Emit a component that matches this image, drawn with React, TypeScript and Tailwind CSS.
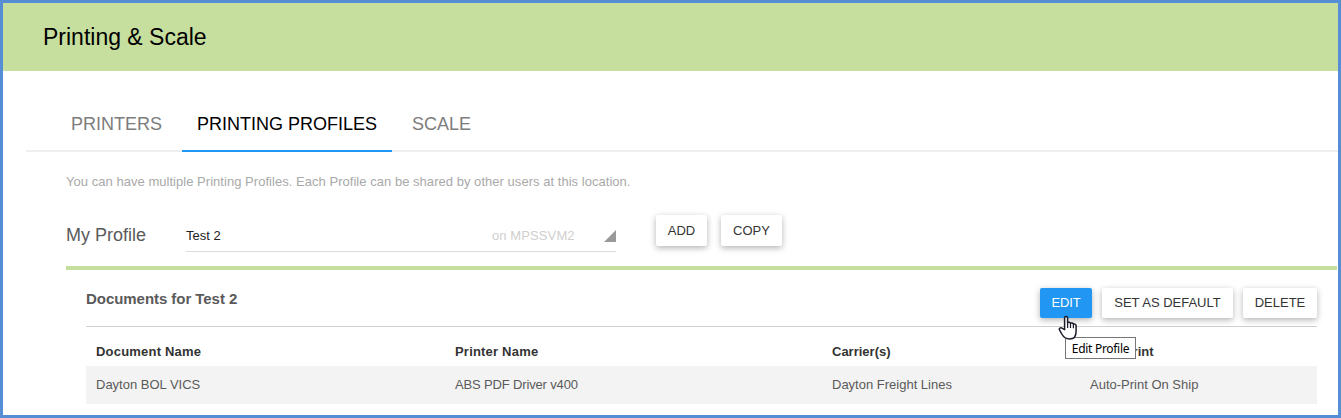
import type { ReactNode } from "react";

function Button({ children, className }: { children: ReactNode; className: string }) {
  return (
    <button
      className={`flex items-start justify-center rounded-[2px] text-[13px] whitespace-nowrap shadow-[0_2px_6px_rgba(0,0,0,0.3)] ${className}`}
    >
      {children}
    </button>
  );
}

function HandCursor() {
  return (
    <svg className="absolute left-[18px] top-[27px] z-20" width="22" height="27" viewBox="0 0 22 27">
      <path
        d="M6.6 14.6V3.2c0-2.2 3-2.2 3 0V7.9c.6-.9 2.6-.7 2.9.5.7-.8 2.6-.5 2.9.8.9-.6 2.7-.1 2.7 1.6v5.7c0 4.6-2.4 7.5-6.4 7.5-4.3 0-6.2-1.9-7.9-5l-2.3-4.1c-.8-1.7 1.1-2.7 2.5-1.8z"
        fill="#fff"
        stroke="#1a1a2b"
        strokeWidth="1.5"
        strokeLinejoin="round"
      />
      <path d="M9.6 7.9v5M12.5 8.5v4.6M15.4 9.3v4" fill="none" stroke="#1a1a2b" strokeWidth="1.2" />
    </svg>
  );
}

export default function App() {
  return (
    <div className="flex h-[418px] w-[1341px] flex-col overflow-hidden border-3 border-[#558ed5] bg-white font-['Liberation_Sans',Arial,sans-serif] text-[13px] text-[#5a5a5a]">
      <header className="flex h-[68px] shrink-0 items-center bg-[#c7df9e] pl-10">
        <h1 className="text-[23px] leading-7 text-black">Printing &amp; Scale</h1>
      </header>

      <nav className="mt-[25px] ml-[23px] flex h-14 shrink-0 border-b-2 border-[#eeeeee] pl-[30px] text-[18px] leading-[56px] text-[#7d7d7d]">
        <span className="w-[126px] pl-[15px]">PRINTERS</span>
        <span className="h-14 w-[210px] border-b-2 border-[#2196f3] pl-[15px] text-black">PRINTING PROFILES</span>
        <span className="pl-5">SCALE</span>
      </nav>

      <main className="mr-px ml-[63px] flex flex-col">
        <p className="mt-5 h-5 leading-5 tracking-[0.035px] whitespace-nowrap text-[#a9a9a9]">
          You can have multiple Printing Profiles. Each Profile can be shared by other users at this location.
        </p>

        <section className="mt-[23px] flex h-[51px] items-start">
          <h2 className="w-[120px] pt-[10px] text-[18px] leading-5">My Profile</h2>
          <div className="flex h-[37px] w-[430px] items-start border-b border-[#dcdcdc] pt-[11px] leading-5 text-[#222]">
            <span className="w-[306px]">Test 2</span>
            <span className="flex-1 tracking-[0.1px] text-[#cfcfcf]">on MPSSVM2</span>
            <svg className="mt-1" width="12" height="12" viewBox="0 0 12 12">
              <path d="M12 0v12H0z" fill="#999" />
            </svg>
          </div>
          <Button className="ml-10 h-[31px] w-[51px] bg-white leading-[31px] text-[#333]">ADD</Button>
          <Button className="ml-[14px] h-[31px] w-[61px] bg-white leading-[31px] text-[#333]">COPY</Button>
        </section>

        <section className="border-t-4 border-[#c7df9e] pr-5 pl-5">
          <div className="flex h-[57px] items-start border-b border-[#d0d0d0] pt-[18px]">
            <h3 className="flex-1 text-[15px] leading-[22px] font-bold tracking-[-0.05px]">Documents for Test 2</h3>
            <div className="flex gap-[10px]">
              <div className="relative">
                <Button className="h-[30px] w-[52px] bg-[#2196f3] leading-[29px] tracking-[-0.2px] text-white">EDIT</Button>
                <HandCursor />
                <div
                  role="tooltip"
                  className="absolute top-[49px] left-[25px] z-10 flex h-[22px] w-[71px] items-center justify-center border border-[#767676] bg-white pt-[2px] font-['Noto_Sans',sans-serif] text-[12px] tracking-[-0.3px] whitespace-nowrap text-black"
                >
                  Edit Profile
                </div>
              </div>
              <Button className="h-[30px] w-[131px] bg-white leading-[29px] text-[#333]">SET AS DEFAULT</Button>
              <Button className="h-[30px] w-[74px] bg-white leading-[29px] text-[#333]">DELETE</Button>
            </div>
          </div>

          <table className="w-full table-fixed border-collapse text-left">
            <colgroup>
              <col className="w-[359px]" />
              <col className="w-[377px]" />
              <col className="w-[258px]" />
              <col />
            </colgroup>
            <thead>
              <tr className="h-[39px] tracking-[0.2px] text-[#333]">
                <th className="pt-[10px] pl-[10px]">Document Name</th>
                <th className="pt-[10px] pl-[10px]">Printer Name</th>
                <th className="pt-[10px] pl-[10px] tracking-[0px]">Carrier(s)</th>
                <th className="pt-[10px] pl-[10px] tracking-[0px]">Auto-Print</th>
              </tr>
            </thead>
            <tbody>
              <tr className="h-[38px] bg-[#f3f3f3]">
                <td className="pl-[10px]">Dayton BOL VICS</td>
                <td className="pl-[10px] tracking-[-0.15px]">ABS PDF Driver v400</td>
                <td className="pl-[10px]">Dayton Freight Lines</td>
                <td className="pl-[10px]">Auto-Print On Ship</td>
              </tr>
            </tbody>
          </table>
        </section>
      </main>
    </div>
  );
}
